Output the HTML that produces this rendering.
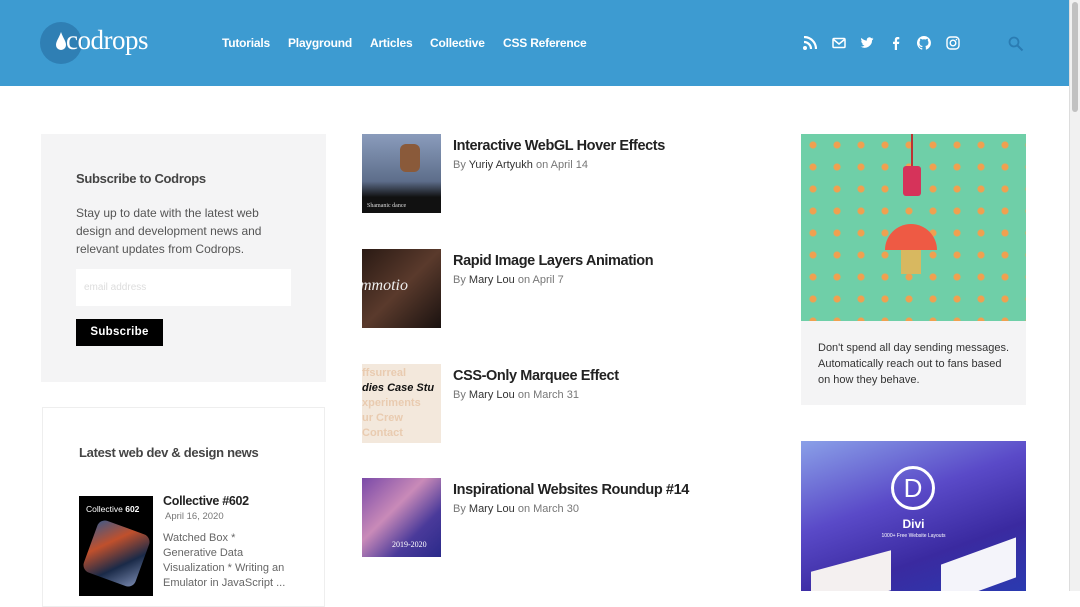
<!DOCTYPE html>
<html><head><meta charset="utf-8"><style>
*{margin:0;padding:0;box-sizing:border-box}
body{width:1080px;height:591px;overflow:hidden;background:#fff;font-family:"Liberation Sans",sans-serif;color:#333;position:relative}
.hdr{position:absolute;left:0;top:0;width:1069px;height:86px;background:#3d9bd1}
.sb{position:absolute;left:1069px;top:0;width:11px;height:591px;background:#f1f1f1;border-left:1px solid #ddd}
.sb div{position:absolute;left:2px;top:2px;width:6px;height:110px;background:#c1c1c1;border-radius:3px}
.logo{position:absolute;left:40px;top:22px;width:42px;height:42px;border-radius:50%;background:#2f7fb4}
.logot{position:absolute;left:66px;top:25px;color:#fff;font-family:"Liberation Serif",serif;font-size:27px;letter-spacing:-0.5px}
.nav{position:absolute;top:36px;color:#fff;font-weight:bold;font-size:12px;letter-spacing:-0.2px}
.ic{position:absolute;top:36px}
.box1{position:absolute;left:41px;top:134px;width:285px;height:248px;background:#f4f4f5}
.box2{position:absolute;left:42px;top:407px;width:283px;height:200px;border:1px solid #eee;background:#fff}
h3{font-size:13px;color:#444;font-weight:bold;letter-spacing:-0.3px}
.art{position:absolute;left:362px;width:420px}
.th{position:absolute;left:0;top:0;width:79px;height:79px}
.at{position:absolute;left:91px;top:4px;font-size:14.5px;font-weight:bold;color:#222;letter-spacing:-0.4px;white-space:nowrap}
.by{position:absolute;left:91px;top:25px;font-size:11px;color:#777}
.by b{font-weight:normal;color:#333}
</style></head><body>
<div class="hdr">
 <div class="logo"></div>
 <svg style="position:absolute;left:54px;top:31px" width="14" height="22" viewBox="0 0 14 22"><path d="M7 1C5 7 2 10 2 14a5 5 0 0010 0c0-4-3-7-5-13z" fill="#fff"/></svg>
 <div class="logot">codrops</div>
 <div class="nav" style="left:222px">Tutorials</div>
 <div class="nav" style="left:288px">Playground</div>
 <div class="nav" style="left:370px">Articles</div>
 <div class="nav" style="left:430px">Collective</div>
 <div class="nav" style="left:503px">CSS Reference</div>
 <svg class="ic" style="left:803px" width="14" height="14" viewBox="0 0 14 14"><circle cx="2" cy="12" r="2" fill="#fff"/><path d="M1 6a7 7 0 017 7M1 1a12 12 0 0112 12" stroke="#fff" stroke-width="2.2" fill="none"/></svg>
 <svg class="ic" style="left:832px" width="14" height="14" viewBox="0 0 14 14"><rect x="1" y="2.5" width="12" height="9" rx="1" stroke="#fff" stroke-width="1.5" fill="none"/><path d="M1.5 3.5l5.5 4.5 5.5-4.5" stroke="#fff" stroke-width="1.5" fill="none"/></svg>
 <svg class="ic" style="left:860px" width="14" height="14" viewBox="0 0 24 24"><path fill="#fff" d="M23 4.5c-.8.4-1.7.6-2.6.7.9-.6 1.600-1.4 2-2.5-.9.5-1.9.9-2.9 1.1a4.5 4.5 0 00-7.7 4.1C8 7.7 4.7 5.9 2.5 3.2a4.5 4.5 0 001.4 6c-.7 0-1.4-.2-2-.6 0 2.2 1.6 4 3.6 4.4-.7.2-1.4.2-2 .1.6 1.8 2.2 3.1 4.2 3.1A9 9 0 011 18.1 12.8 12.8 0 0020.7 7.3c.9-.6 1.7-1.5 2.3-2.8z"/></svg>
 <svg class="ic" style="left:889px" width="14" height="14" viewBox="0 0 14 14"><path d="M8 14V8h2l.3-2.3H8V4.3c0-.6.2-1 1.1-1h1.2V1.2C10 1.1 9.3 1 8.6 1 6.9 1 5.8 2 5.8 3.9v1.8H4V8h1.8v6z" fill="#fff"/></svg>
 <svg class="ic" style="left:917px" width="14" height="14" viewBox="0 0 16 16"><path fill="#fff" d="M8 0a8 8 0 00-2.5 15.6c.4 0 .5-.2.5-.4v-1.5c-2.2.5-2.7-1-2.7-1-.4-.9-.9-1.200-.9-1.2-.7-.5.1-.5.1-.5.8.1 1.2.8 1.2.8.7 1.3 1.9.9 2.3.7.1-.5.3-.9.5-1.1-1.8-.2-3.6-.9-3.6-4 0-.9.3-1.6.8-2.1-.1-.2-.4-1 .1-2.1 0 0 .7-.2 2.2.8a7.5 7.5 0 014 0c1.5-1 2.2-.8 2.2-.8.4 1.1.2 1.9.1 2.1.5.6.8 1.3.8 2.1 0 3.1-1.9 3.8-3.6 4 .3.3.6.8.6 1.5v2.2c0 .2.1.5.6.4A8 8 0 008 0z"/></svg>
 <svg class="ic" style="left:946px" width="14" height="14" viewBox="0 0 14 14"><rect x="1" y="1" width="12" height="12" rx="3.5" stroke="#fff" stroke-width="1.4" fill="none"/><circle cx="7" cy="7" r="2.8" stroke="#fff" stroke-width="1.4" fill="none"/><circle cx="10.5" cy="3.5" r=".8" fill="#fff"/></svg>
 <svg class="ic" style="left:1008px" width="16" height="16" viewBox="0 0 16 16"><circle cx="6" cy="6" r="4.5" stroke="#2a7cb3" stroke-width="1.8" fill="none"/><path d="M9.5 9.5l5 5" stroke="#2a7cb3" stroke-width="2"/></svg>
</div>
<div class="sb"><div></div></div>

<div class="box1">
 <h3 style="position:absolute;left:35px;top:37px">Subscribe to Codrops</h3>
 <p style="position:absolute;left:35px;top:70px;width:215px;font-size:12px;line-height:18px;color:#555">Stay up to date with the latest web design and development news and relevant updates from Codrops.</p>
 <div style="position:absolute;left:35px;top:135px;width:215px;height:37px;background:#fff;font-size:10px;color:#ddd;padding:13px 8px">email address</div>
 <div style="position:absolute;left:35px;top:185px;width:87px;height:27px;background:#000;color:#fff;font-size:11.5px;font-weight:bold;text-align:center;line-height:27px;letter-spacing:.3px">Subscribe</div>
</div>
<div class="box2">
 <h3 style="position:absolute;left:36px;top:37px">Latest web dev &amp; design news</h3>
 <div style="position:absolute;left:36px;top:88px;width:74px;height:100px;background:#000;overflow:hidden">
  <div style="color:#fff;font-size:8.5px;padding:8px 0 0 7px">Collective <b>602</b></div>
  <div style="position:absolute;left:10px;top:30px;width:55px;height:55px;background:linear-gradient(135deg,#3d5a8a,#c0502c,#1a2a48,#7a8ab0);transform:rotate(20deg);border-radius:8px"></div>
 </div>
 <div style="position:absolute;left:120px;top:86px;font-size:12.5px;font-weight:bold;color:#222;letter-spacing:-0.3px">Collective #602</div>
 <div style="position:absolute;left:122px;top:103px;font-size:9.5px;color:#777">April 16, 2020</div>
 <div style="position:absolute;left:120px;top:123px;width:128px;font-size:11px;line-height:15px;color:#666">Watched Box * Generative Data Visualization * Writing an Emulator in JavaScript ...</div>
</div>

<div class="art" style="top:134px"><div class="th" style="background:linear-gradient(#8a9cbc,#5d6d8a 60%,#111 80%)"><div style="position:absolute;left:38px;top:10px;width:20px;height:28px;background:#8a5a3a;border-radius:6px"></div><div style="position:absolute;left:5px;bottom:4px;color:#ddd;font-size:6px;font-family:'Liberation Serif',serif">Shamanic dance</div></div><div class="at">Interactive WebGL Hover Effects</div><div class="by">By <b>Yuriy Artyukh</b> on April 14</div></div>
<div class="art" style="top:249px"><div class="th" style="background:linear-gradient(135deg,#2a1a14,#5a3a2c,#1a1210);overflow:hidden"><div style="position:absolute;left:-2px;top:28px;color:#eee;font-style:italic;font-family:'Liberation Serif',serif;font-size:16px">mmotio</div></div><div class="at">Rapid Image Layers Animation</div><div class="by">By <b>Mary Lou</b> on April 7</div></div>
<div class="art" style="top:364px"><div class="th" style="background:#f3e8dc;overflow:hidden;font-size:11px;line-height:15px;color:#e9cbb0;font-weight:bold;white-space:nowrap;padding-top:2px">ffsurreal<br><span style="color:#111;font-style:italic">dies Case Stu</span><br>xperiments<br>ur Crew<br>Contact</div><div class="at">CSS-Only Marquee Effect</div><div class="by">By <b>Mary Lou</b> on March 31</div></div>
<div class="art" style="top:478px"><div class="th" style="background:linear-gradient(135deg,#7a4aa8,#c98ab8 40%,#4a3a9a 70%,#2a2a8a)"><div style="position:absolute;left:30px;bottom:8px;color:#fff;font-size:8px;font-family:'Liberation Serif',serif">2019-2020</div></div><div class="at">Inspirational Websites Roundup #14</div><div class="by">By <b>Mary Lou</b> on March 30</div></div>

<div style="position:absolute;left:801px;top:134px;width:225px;height:271px;background:#f4f4f5">
 <div style="position:absolute;left:0;top:0;width:225px;height:187px;background:#6fcfa8;background-image:radial-gradient(circle,#f0a050 3px,transparent 4px);background-size:24px 22px;overflow:hidden">
  <div style="position:absolute;left:110px;top:0;width:2px;height:40px;background:#b33"></div>
  <div style="position:absolute;left:102px;top:32px;width:18px;height:30px;background:#d6335a;border-radius:3px"></div>
  <div style="position:absolute;left:84px;top:90px;width:52px;height:26px;background:#ee5a44;border-radius:26px 26px 0 0"></div>
  <div style="position:absolute;left:100px;top:116px;width:20px;height:24px;background:#d8b860"></div>
 </div>
 <p style="position:absolute;left:17px;top:206px;width:195px;font-size:11px;line-height:16px;color:#333">Don't spend all day sending messages. Automatically reach out to fans based on how they behave.</p>
</div>
<div style="position:absolute;left:801px;top:441px;width:225px;height:150px;background:linear-gradient(160deg,#8aa0e8,#5a4ac8 40%,#3a2aa0 70%,#2a3ab0);overflow:hidden">
 <div style="position:absolute;left:90px;top:25px;width:44px;height:44px;border:3px solid #fff;border-radius:50%;color:#fff;font-size:26px;text-align:center;line-height:38px">D</div>
 <div style="position:absolute;left:0;width:225px;top:76px;text-align:center;color:#fff;font-weight:bold;font-size:12px">Divi</div>
 <div style="position:absolute;left:0;width:225px;top:92px;text-align:center;color:#fff;font-size:5px">1000+ Free Website Layouts</div>
 <div style="position:absolute;left:10px;top:120px;width:80px;height:40px;background:#f4f0f0;transform:skewY(-15deg)"></div>
 <div style="position:absolute;left:140px;top:110px;width:75px;height:40px;background:#f4f4fa;transform:skewY(-20deg)"></div>
</div>
</body></html>
